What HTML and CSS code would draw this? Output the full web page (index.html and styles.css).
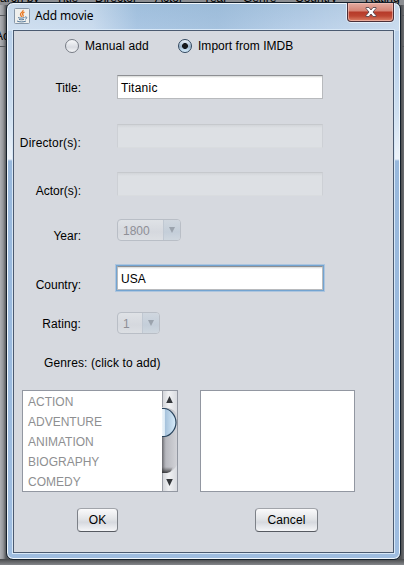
FILE: index.html
```html
<!DOCTYPE html>
<html lang="en">
<head>
<meta charset="utf-8">
<title>Add movie</title>
<link rel="stylesheet" href="styles.css">
</head>
<body>
<div class="desktop">
  <div class="behind" aria-hidden="true">
    <div class="columns"><span>arch by</span><span>Title</span><span>Director</span><span>Actor</span><span>Year</span><span>Genre</span><span>Country</span><span>Rating</span></div>
    <div class="behind-cell">Ac</div>
  </div>
  <main class="window">
    <header class="titlebar">
      <svg class="java" width="16" height="16" viewBox="0 0 16 16">
        <rect x=".5" y=".5" width="15" height="15" rx="1" fill="#eeefed" stroke="#8797a8"/>
        <path d="M9 2c1 2-3 2.500-2.500 4.500.2 1 1 1.300 1 2.500M10.500 4c-2 1-2.500 2-1.500 3 .5.600.3 1.200-.3 1.800" fill="none" stroke="#e87923" stroke-width="1.300"/>
        <path d="M4 9.500c1 .8 5 .8 6.500 0M5 11.300c1.500.6 4 .6 5 0M3 13c2 1.200 7 1.200 9 0M11 9c2-.6 2.500 1.300.3 2.300" fill="none" stroke="#55799b"/>
      </svg>
      <span class="caption">Add movie</span>
      <button class="close" aria-label="Close">
        <svg width="12" height="10" viewBox="0 0 12 10"><path d="M1 .5h3L6 3 8 .5h3v1L8 5l3 3.500v1H8L6 7 4 9.500H1v-1L4 5 1 1.500z" fill="#fff" stroke="#59484f" stroke-width=".9"/></svg>
      </button>
    </header>
    <form class="content">
      <div class="modes">
        <span class="radio"></span><span class="mode manual">Manual add</span>
        <span class="radio on"></span><span class="mode import">Import from IMDB</span>
      </div>
      <div class="row title"><label>Title:</label><div class="field">Titanic</div></div>
      <div class="row director"><label>Director(s):</label><div class="field off"></div></div>
      <div class="row actor"><label>Actor(s):</label><div class="field off"></div></div>
      <div class="row year"><label>Year:</label><div class="combo wide"><span>1800</span><i><b></b></i></div></div>
      <div class="row country"><label>Country:</label><div class="field focus">USA</div></div>
      <div class="row rating"><label>Rating:</label><div class="combo"><span>1</span><i><b></b></i></div></div>
      <div class="genres">Genres: (click to add)</div>
      <div class="lists">
        <div class="list">
          <ul><li>ACTION</li><li>ADVENTURE</li><li>ANIMATION</li><li>BIOGRAPHY</li><li>COMEDY</li></ul>
          <svg class="scroll" width="15" height="100" viewBox="0 0 15 100">
            <defs>
              <linearGradient id="track"><stop offset="0" stop-color="#96979d"/><stop offset=".3" stop-color="#b9bac0"/><stop offset="1" stop-color="#d2d3d8"/></linearGradient>
              <linearGradient id="arrow"><stop offset="0" stop-color="#cfd1d6"/><stop offset=".45" stop-color="#f1f2f4"/><stop offset="1" stop-color="#d9dbe0"/></linearGradient>
              <linearGradient id="thumb"><stop offset="0" stop-color="#f4f8fb"/><stop offset=".25" stop-color="#dceaf5"/><stop offset=".3" stop-color="#a7c3dc"/><stop offset="1" stop-color="#d9edfb"/></linearGradient>
              <linearGradient id="shade" x2="0" y2="1"><stop offset="0" stop-color="#333" stop-opacity="0"/><stop offset="1" stop-color="#28282b"/></linearGradient>
              <linearGradient id="edge"><stop offset="0" stop-color="#28282b"/><stop offset="1" stop-color="#28282b" stop-opacity="0"/></linearGradient>
            </defs>
            <path fill="url(#track)" d="M0 0h15v100H0z"/>
            <path fill="url(#edge)" d="M0 45h3v37H0z" opacity=".4"/>
            <path fill="url(#shade)" d="M0 76h11l-3 6H0z" opacity=".85"/>
            <path fill="url(#arrow)" d="M0 0h15v24c-2-5-6-7-11-7H0zM0 82h5c4-1 8-4 10-8v26H0z"/>
            <path fill="url(#thumb)" stroke="#28435c" stroke-width="1.200" d="M-1 17.500h3c6 0 12 7 12 14s-6 14-12 14h-3z"/>
            <path fill="#34373b" d="M7.500 5l3.300 7H4.200zM4.200 88h6.600l-3.300 7z"/>
            <path d="M.5 0v16M.5 82v18" stroke="#9a9da5"/>
          </svg>
        </div>
        <div class="list empty"></div>
      </div>
      <div class="buttons"><button type="button" class="ok">OK</button><button type="button" class="cancel">Cancel</button></div>
    </form>
  </main>
</div>
</body>
</html>
```
FILE: styles.css
```css
* { box-sizing: border-box; }
body { margin: 0; overflow: hidden; font: 12px/14px "Liberation Sans", Arial, sans-serif; color: #000; }
.desktop {
  position: relative; width: 404px; height: 565px; padding: 2px 3px 5px 6px;
  background: linear-gradient(90deg, #aeb0b4, #96989c 3px, #55575a 6px, #55575a 398px, #4d4f52 401px, #6d6f73);
}
.desktop::after {
  content: ""; position: absolute; z-index: 0; left: 0; right: 0; bottom: 0; height: 6px;
  background: linear-gradient(#47494b, #85878b);
}
.behind { position: absolute; inset: 0; overflow: hidden; }
.columns { display: flex; margin-top: -9px; height: 14px; font-size: 12px; background: #8c8e92; white-space: nowrap; }
.columns span { width: 60px; flex: none; }
.columns span:first-child { width: 56px; }
.columns span:nth-child(2) { width: 39px; }
.columns span:nth-child(4) { width: 48px; }
.columns span:nth-child(5) { width: 40px; }
.columns span:nth-child(6) { width: 52px; }
.columns span:nth-child(7) { width: 70px; }
.behind-cell { margin-top: 10px; padding-top: 13px; height: 32px; margin-left: -5px; border-top: 1px solid #54575b; border-bottom: 1px solid #54575b; }
.window {
  position: relative; z-index: 1; width: 395px; height: 558px; padding: 0 5px 4px;
  border: 1px solid #15202b; border-radius: 7px; overflow: hidden;
  box-shadow: inset 0 0 0 1px #f1f7fc;
  background:
    linear-gradient(90deg, #ffffff55, #ffffff44 85px, #83add342 130px, #81a9cc55 210px, #ffffff00 290px, #ffffff44) 0 0 / 100% 28px no-repeat,
    linear-gradient(#a9c4df 0, #b9d0e9 28px, #bdd3ec 60px, #cedff0 110px, #edf3fa 156px, #98b8dc 158px, #9fbde0 100%);
}
.titlebar { display: flex; height: 27px; padding: 5px 0 0 2px; }
.java { margin-left: 0; flex: none; }
.caption { margin: 0 0 0 5px; font: 12px/16px "Noto Sans", sans-serif; letter-spacing: -.15px; flex: 1; }
.close {
  width: 47px; height: 19px; margin: -5px 1px 0 0; padding: 0 0 1px; display: flex; justify-content: center; align-items: center;
  border: 1px solid #4b2f38; border-top: 0; border-radius: 0 0 4px 4px;
  background: linear-gradient(#e4aca2, #d58475 8px, #b63a29 9px, #bd4632 13px, #dc8268);
  box-shadow: inset 0 0 0 1px #f7c8be99, 0 0 0 1px #e5effa;
}
.content {
  width: 381px; height: 523px; border: 1px solid #4b5a70; margin-left: 1px;
  background: #d6d9df; box-shadow: 0 0 0 1px #d8e8f7;
}
.modes { display: flex; height: 44px; padding: 8px 0 0 51px; }
.radio { width: 14px; height: 14px; border: 1px solid #777c85; border-radius: 50%; background: linear-gradient(#f7f8fa, #d9dce2 60%, #f4f5f7); flex: none; }
.radio.on { border-color: #31475e; background: radial-gradient(circle, #15191d 0 2.600px, #15191d00 3.300px), linear-gradient(#eef4fa, #9bb5cd 55%, #d9f0ff); }
.mode { margin-left: 6px; letter-spacing: .12px; white-space: nowrap; }
.manual { width: 93px; }
.import { letter-spacing: .04px; }
.row { display: flex; align-items: flex-start; height: 48px; }
.row label { width: 67px; margin-right: 36px; text-align: right; white-space: nowrap; }
.title { height: 49px; }
.title label { padding-top: 6px; }
.director label, .actor label { padding-top: 12px; }
.director label { letter-spacing: .15px; }
.actor, .year { height: 47px; }
.year label { padding-top: 10px; }
.country { height: 46px; }
.country label { padding-top: 12px; }
.rating { height: 40px; }
.rating label { padding-top: 5px; letter-spacing: .12px; }
.field {
  width: 206px; height: 24px; padding: 5px 3px; border: 1px solid #b8babd; border-top-color: #8d8f93;
  background: linear-gradient(#d5d7d5, #fff 2px);
}
.title .field { letter-spacing: .25px; }
.field.off { border-color: #cdd0d5; border-top-color: #c6c9cd; border-bottom-color: #d9dcdf; background: linear-gradient(#d2d5d9, #dde0e4 3px); }
.field.focus { box-shadow: 0 0 0 1px #73a4d1, 0 0 0 2px #adc5de; }
.combo {
  display: flex; width: 43px; height: 22px; border: 1px solid #b9bec6; border-radius: 4px; overflow: hidden;
  color: #8e8f96; background: linear-gradient(#dfe2e6, #d5d8de 60%, #dcdfe3);
}
.combo.wide { width: 64px; }
.combo span { flex: 1; padding: 4px 0 0 5px; }
.combo i { width: 17px; padding: 7px 0 0 5px; border-left: 1px solid #c0c8d2; background: linear-gradient(#d0d7df, #c4ced9 60%, #cfd7df); }
.combo b { display: block; width: 0; border: solid transparent; border-width: 6px 3.500px 0; border-top-color: #9ba3ad; }
.genres { height: 38px; padding: 4px 0 0 30px; letter-spacing: .12px; }
.lists { display: flex; gap: 22px; height: 118px; padding-left: 8px; }
.list { display: flex; width: 156px; height: 102px; border: 1px solid #9297a1; background: #fff; }
.list.empty { width: 155px; }
.list ul { flex: 1; margin: 0; padding: 1px 0 0 5px; list-style: none; color: #8e8f91; line-height: 20px; }
.list li { height: 20px; }
.scroll { flex: none; display: block; }
.buttons { display: flex; gap: 137px; padding-left: 63px; }
.buttons button {
  height: 24px; padding: 0; font: inherit; color: #000; border: 1px solid #7d8188; border-top-color: #a1a4aa; border-bottom-color: #565a61; border-radius: 4px;
  background: linear-gradient(#fafafb, #e3e5e8 45%, #d6d9df 60%, #f5f6f8);
}
.ok { width: 41px; }
.buttons .cancel { width: 63px; letter-spacing: .12px; }
```
